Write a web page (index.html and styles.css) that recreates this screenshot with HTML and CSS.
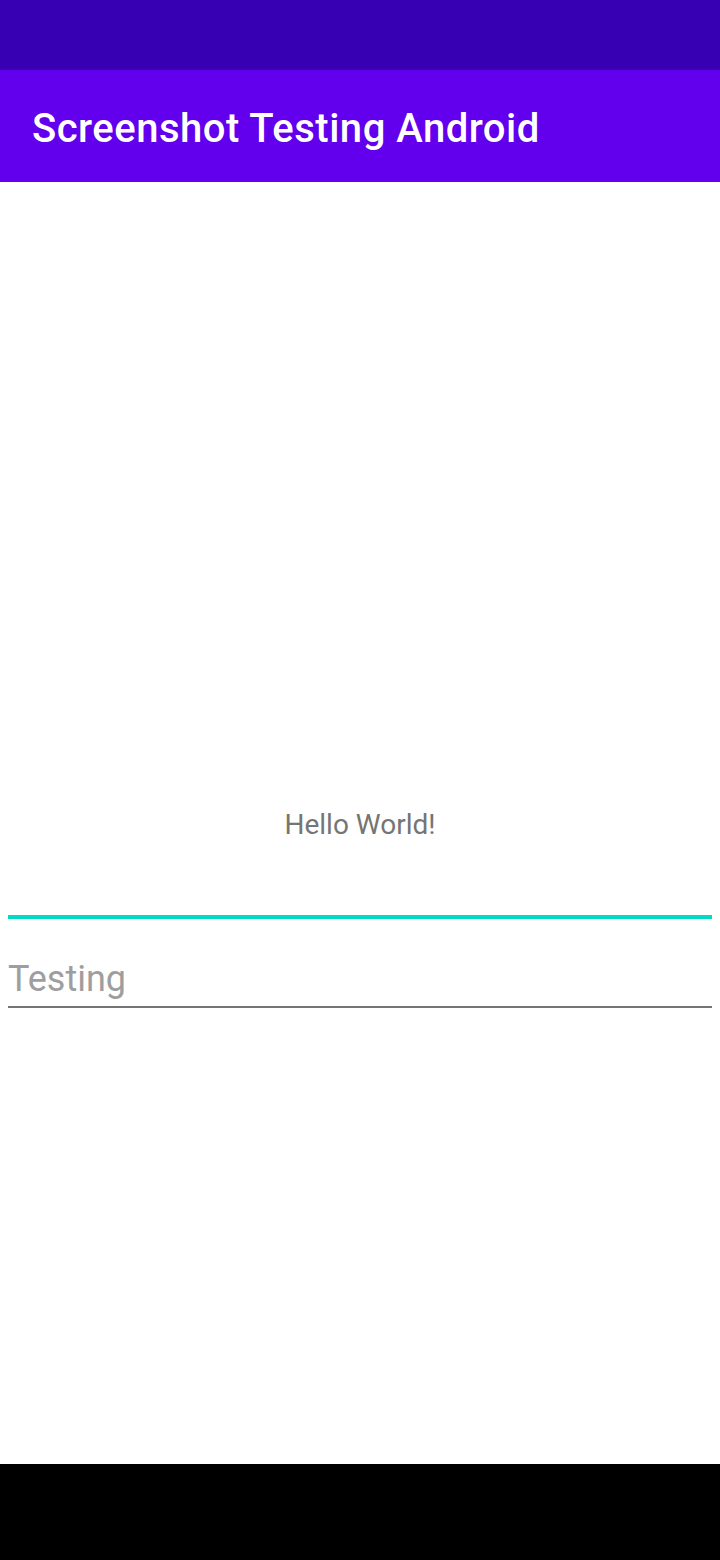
FILE: index.html
```html
<!DOCTYPE html>
<html>
<head>
<meta charset="utf-8">
<link rel="stylesheet" href="styles.css">
</head>
<body>
<div class="screen">
  <div class="status-bar"></div>
  <header class="app-bar"><h1 class="title">Screenshot Testing Android</h1></header>
  <main class="content">
    <p class="hello">Hello World!</p>
    <div class="accent-line"></div>
    <div class="field"><span class="hint">Testing</span></div>
  </main>
  <div class="nav-bar"></div>
</div>
</body>
</html>
```
FILE: styles.css
```css
* { box-sizing: border-box; }
html, body { margin: 0; padding: 0; }
body { font-family: Roboto, "Noto Sans", sans-serif; background: #fff; }
.screen { width: 720px; height: 1560px; display: flex; flex-direction: column; }
.status-bar { height: 70px; background: #3700B3; flex: none; }
.app-bar { height: 112px; background: #6200EE; flex: none; display: flex; align-items: center; padding: 6px 32px 0; }
.title { margin: 0; color: #fff; font-size: 40px; font-weight: 500; line-height: 1; letter-spacing: 0.5px; }
.content { flex: 1; display: flex; flex-direction: column; padding: 626px 8px 0; }
.hello { margin: 0; text-align: center; color: #757575; font-size: 28px; line-height: 33px; }
.accent-line { height: 4px; background: #03DAC5; margin-top: 74px; }
.field { margin-top: 38px; border-bottom: 2px solid #757575; height: 51px; display: flex; align-items: flex-end; }
.hint { color: #9e9e9e; font-size: 36px; line-height: 42px; padding-bottom: 6px; }
.nav-bar { height: 96px; background: #000; flex: none; }
```
